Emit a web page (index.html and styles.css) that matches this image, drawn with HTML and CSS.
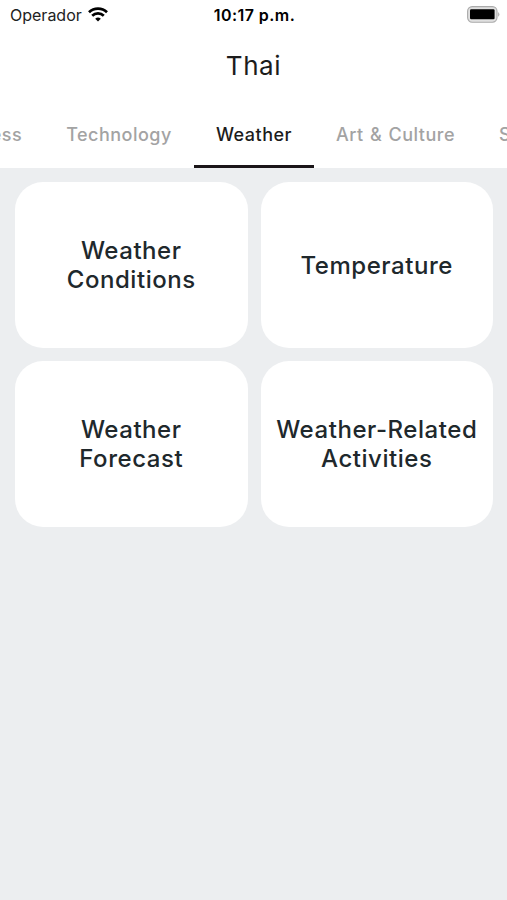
FILE: index.html
```html
<!DOCTYPE html>
<html lang="en">
<head>
    <meta charset="UTF-8">
    <meta name="viewport" content="width=device-width, initial-scale=1.0">
    <title>Thai</title>
    <link rel="stylesheet" href="styles.css">
</head>
<body>
    <header>
        <div class="status-bar">
            <div class="carrier">
                <span>Operador</span>
                <svg class="wifi" viewBox="0 0 20 15" fill="none" stroke="#000" stroke-width="2.7">
                    <path d="M1 5.3a13 13 0 0 1 18 0"></path>
                    <path d="M4.2 8.8a8.3 8.3 0 0 1 11.6 0"></path>
                    <path d="M10 14.4L7.2 11.8a4.2 4.2 0 0 1 5.6 0z" fill="#000" stroke="none"></path>
                </svg>
            </div>
            <div class="time">10:17 p.m.</div>
            <svg class="battery" viewBox="0 0 33 17">
                <rect x="0.6" y="0.6" width="29.4" height="15.6" rx="4.6" fill="#e0e0e0" stroke="#aaa" stroke-width="1.1"></rect>
                <rect x="3" y="3.2" width="24.6" height="10" rx="1.2" fill="#000"></rect>
                <path d="M31.2 6q2.4 2.4 0 4.8z" fill="#aaa"></path>
            </svg>
        </div>
        <h1>Thai</h1>
        <nav class="tabs">
            <a class="tab">Business</a>
            <a class="tab">Technology</a>
            <a class="tab active">Weather</a>
            <a class="tab">Art &amp; Culture</a>
            <a class="tab">Sports</a>
        </nav>
    </header>

    <main class="cards">
        <div class="card">Weather<br>Conditions</div>
        <div class="card">Temperature</div>
        <div class="card">Weather<br>Forecast</div>
        <div class="card">Weather-Related<br>Activities</div>
    </main>
</body>
</html>
```

FILE: styles.css
```css
/* Reset and base styles */
* {
    margin: 0;
    padding: 0;
    box-sizing: border-box;
}
body {
    font-family: Inter, sans-serif;
    color: #20282c;
    background: #eceef0;
    min-height: 100vh;
    overflow: hidden;
}

/* Header styles */
header {
    height: 168px;
    background: #fff;
    overflow: hidden;
}
.status-bar {
    display: grid;
    grid-template-columns: 1fr auto 1fr;
    align-items: center;
    height: 29px;
    padding: 0 7px 0 10px;
    font-size: 16px;
    color: #222;
}
.carrier {
    display: flex;
    align-items: center;
    gap: 6px;
}
.wifi {
    width: 20px;
    height: 15px;
}
.time {
    padding-right: 1px;
    font-weight: 600;
    letter-spacing: 0.45px;
    color: #000;
}
.battery {
    width: 33px;
    height: 17px;
    justify-self: end;
}
h1 {
    height: 71px;
    line-height: 74px;
    font-size: 26px;
    font-weight: 400;
    letter-spacing: 0.6px;
    text-align: center;
    color: #1c1c1c;
}

/* Tabs */
.tabs {
    display: flex;
    justify-content: center;
    height: 68px;
    margin-right: 8px;
}
.tab {
    flex: none;
    height: 68px;
    padding: 0 22px;
    line-height: 69px;
    font-size: 18px;
    font-weight: 500;
    letter-spacing: 0.5px;
    word-spacing: 1px;
    color: #a3a3a3;
}
.tab.active {
    color: #1c1c1c;
    border-bottom: 3px solid #1a1518;
}

/* Cards */
.cards {
    display: grid;
    grid-template-columns: 1fr 1fr;
    gap: 13px;
    padding: 14px 14px 0 15px;
}
.card {
    display: flex;
    align-items: center;
    justify-content: center;
    height: 166px;
    border-radius: 28px;
    background: #fff;
    font-size: 24px;
    font-weight: 500;
    line-height: 29px;
    letter-spacing: 0.55px;
    text-align: center;
}
```
